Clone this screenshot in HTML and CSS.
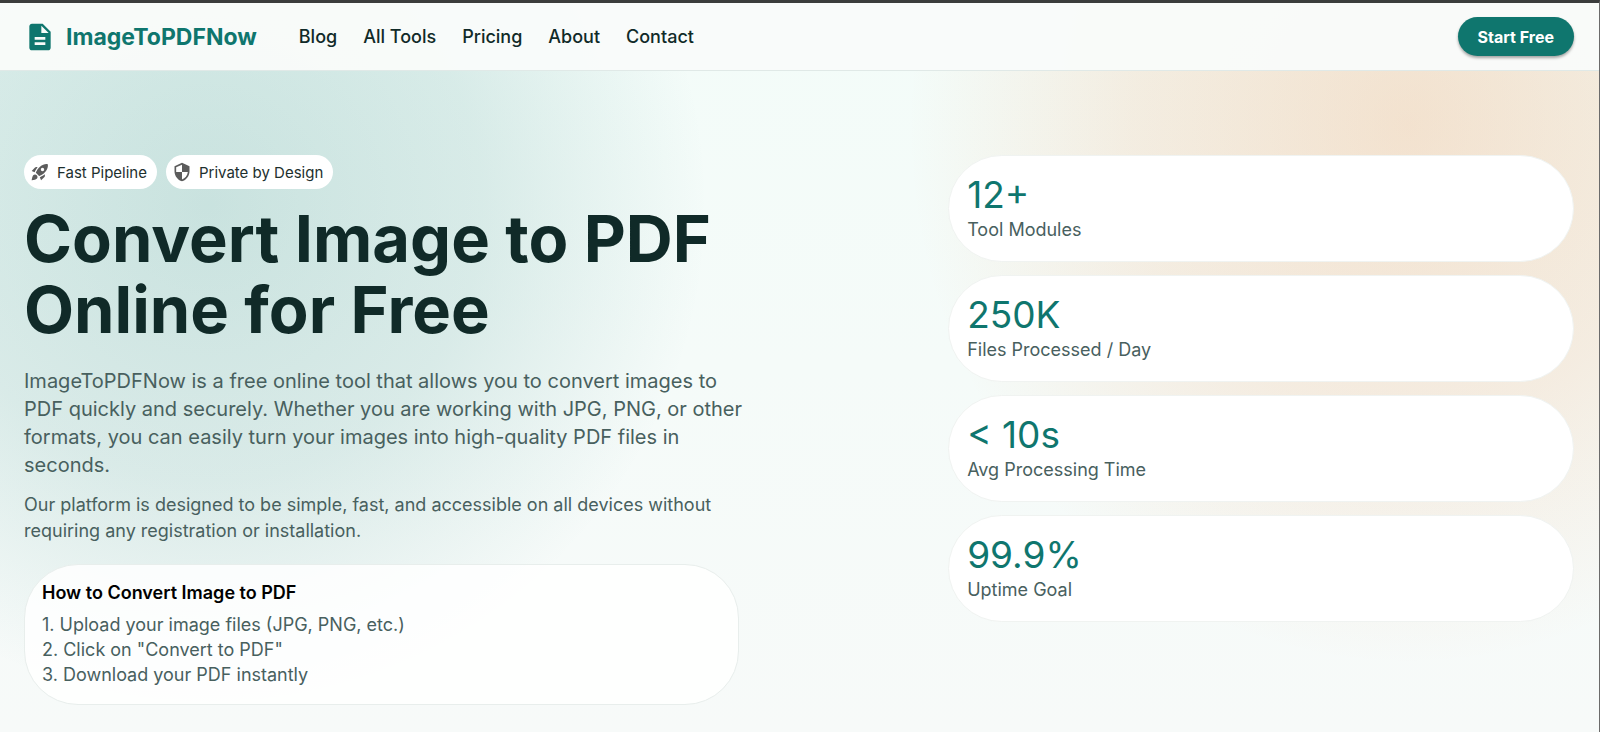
FILE: index.html
```html
<!DOCTYPE html>
<html lang="en">

<head>
    <meta charset="UTF-8">
    <meta name="viewport" content="width=device-width, initial-scale=1.0">
    <title>ImageToPDFNow</title>
    <link rel="stylesheet" href="styles.css">
</head>

<body>
    <header class="navbar">
        <a class="brand" href="#">
            <svg class="brand-icon" viewBox="0 0 24 24" aria-hidden="true">
                <path d="M14 2H6c-1.100 0-2 .9-2 2v16c0 1.100.9 2 2 2h12c1.100 0 2-.9 2-2V8l-6-6zm2 16H8v-2h8v2zm0-4H8v-2h8v2zm-3-5V3.500L18.500 9H13z"/>
            </svg>
            <span>ImageToPDFNow</span>
        </a>
        <nav class="nav-links">
            <a href="#">Blog</a>
            <a href="#">All Tools</a>
            <a href="#">Pricing</a>
            <a href="#">About</a>
            <a href="#">Contact</a>
        </nav>
        <button class="start-btn" type="button">Start Free</button>
    </header>

    <main class="hero">
        <section class="intro">
            <div class="chips">
                <span class="chip">
                    <svg viewBox="0 0 24 24" aria-hidden="true">
                        <path d="M9.190 6.350c-2.040 2.290-3.440 5.580-3.570 5.890L2 10.690l4.050-4.050c.47-.47 1.150-.68 1.810-.55l1.330.26zM11.170 17s3.740-1.550 5.890-3.700c5.400-5.400 4.500-9.620 4.210-10.570-.95-.3-5.170-1.190-10.570 4.210C8.550 9.090 7 12.830 7 12.830L11.170 17zm6.480-2.190c-2.290 2.040-5.580 3.440-5.890 3.570L13.310 22l4.050-4.050c.47-.47.68-1.150.55-1.810l-.26-1.330zM9 18c0 .83-.34 1.580-.88 2.120C6.940 21.300 2 22 2 22s.7-4.940 1.880-6.120C4.420 15.340 5.170 15 6 15c1.660 0 3 1.340 3 3zm4-9c0-1.100.9-2 2-2s2 .9 2 2-.9 2-2 2-2-.9-2-2z"/>
                    </svg>
                    Fast Pipeline
                </span>
                <span class="chip">
                    <svg viewBox="0 0 24 24" aria-hidden="true">
                        <path d="M12 1 3 5v6c0 5.550 3.840 10.740 9 12 5.160-1.260 9-6.450 9-12V5l-9-4zm0 10.990h7c-.53 4.120-3.280 7.790-7 8.940V12H5V6.300l7-3.110v8.800z"/>
                    </svg>
                    Private by Design
                </span>
            </div>

            <h1>Convert Image to PDF Online for Free</h1>
            <p class="lead">ImageToPDFNow is a free online tool that allows you to convert images to PDF quickly and securely. Whether you are working with JPG, PNG, or other formats, you can easily turn your images into high-quality PDF files in seconds.</p>
            <p class="sub">Our platform is designed to be simple, fast, and accessible on all devices without requiring any registration or installation.</p>

            <div class="card steps">
                <h2>How to Convert Image to PDF</h2>
                <p>1. Upload your image files (JPG, PNG, etc.)</p>
                <p>2. Click on "Convert to PDF"</p>
                <p>3. Download your PDF instantly</p>
            </div>
        </section>

        <section class="stats">
            <div class="card stat">
                <div class="stat-value">12+</div>
                <div class="stat-label">Tool Modules</div>
            </div>
            <div class="card stat">
                <div class="stat-value">250K</div>
                <div class="stat-label">Files Processed / Day</div>
            </div>
            <div class="card stat">
                <div class="stat-value">&lt; 10s</div>
                <div class="stat-label">Avg Processing Time</div>
            </div>
            <div class="card stat">
                <div class="stat-value">99.9%</div>
                <div class="stat-label">Uptime Goal</div>
            </div>
        </section>
    </main>
</body>

</html>
```
FILE: styles.css
```css
* {
    box-sizing: border-box;
}

body {
    margin: 0;
    min-height: 100vh;
    font-family: "Inter", "Liberation Sans", sans-serif;
    color: #102a28;
    border-top: 3px solid #3b3d3c;
    border-right: 1px solid #6b6b6b;
    background:
        radial-gradient(ellipse 500px 500px at 13% 28%, rgba(15, 118, 110, 0.19), rgba(15, 118, 110, 0.12) 55%, transparent),
        radial-gradient(ellipse 500px 540px at 88% 17%, rgba(240, 130, 50, 0.21), rgba(240, 130, 50, 0.12) 55%, transparent),
        linear-gradient(180deg, #f3fcf9 0%, #f7faf9 100%);
}

h1,
h2,
p {
    margin: 0;
}

a {
    color: inherit;
    text-decoration: none;
}

/* Top bar */
.navbar {
    display: flex;
    align-items: center;
    height: 68px;
    padding: 0 25px 0 24px;
    background: rgba(249, 251, 250, 0.96);
    border-bottom: 1px solid #e0e9e7;
}

.brand {
    display: flex;
    align-items: center;
    gap: 10px;
    color: #0f766e;
    font-size: 23px;
    font-weight: 700;
}

.brand-icon {
    width: 32px;
    height: 32px;
    fill: #0f766e;
}

.nav-links {
    display: flex;
    gap: 26px;
    margin-left: 42px;
    font-size: 18px;
    font-weight: 500;
}

.start-btn {
    margin-left: auto;
    padding: 0 20px;
    height: 39px;
    border: none;
    border-radius: 20px;
    background: #0f766e;
    color: #fff;
    font-family: inherit;
    font-size: 16px;
    font-weight: 700;
    box-shadow: 0 2px 3px rgba(0, 0, 0, 0.35);
    cursor: pointer;
}

/* Hero */
.hero {
    display: grid;
    grid-template-columns: 7fr 5fr;
    gap: 48px;
    padding: 84px 25px 28px 24px;
}

.intro {
    max-width: 722px;
}

.chips {
    display: flex;
    gap: 9px;
}

.chip {
    display: flex;
    align-items: center;
    gap: 7px;
    height: 34px;
    padding: 0 10px 0 6px;
    border-radius: 17px;
    background: #fff;
    color: #1d2f2e;
    font-size: 15px;
}

.chip svg {
    width: 20px;
    height: 20px;
    fill: #5c5c5c;
}

h1 {
    margin-top: 14px;
    font-size: 65px;
    line-height: 71px;
    font-weight: 700;
}

.lead,
.sub,
.steps p,
.stat-label {
    color: #48605e;
}

.lead {
    margin-top: 22px;
    font-size: 20px;
    line-height: 28px;
}

.sub {
    margin-top: 13px;
    font-size: 18px;
    line-height: 26px;
}

.card {
    border: 1px solid #f0f3f1;
    border-radius: 54px;
    background: #fff;
}

.steps {
    max-width: 715px;
    margin-top: 20px;
    padding: 14px 17px 17px;
    background: rgba(255, 255, 255, 0.84);
    border-color: #e8eeec;
}

.steps h2 {
    margin-bottom: 5px;
    color: #000;
    font-size: 18px;
    line-height: 28px;
    font-weight: 600;
}

.steps p {
    font-size: 18px;
    line-height: 25px;
}

.stats {
    display: flex;
    flex-direction: column;
    gap: 13px;
}

.stat {
    padding: 17px 18px 18px;
}

.stat-value {
    color: #0f766e;
    font-size: 37px;
    line-height: 44px;
}

.stat-label {
    font-size: 18px;
    line-height: 26px;
}
```
